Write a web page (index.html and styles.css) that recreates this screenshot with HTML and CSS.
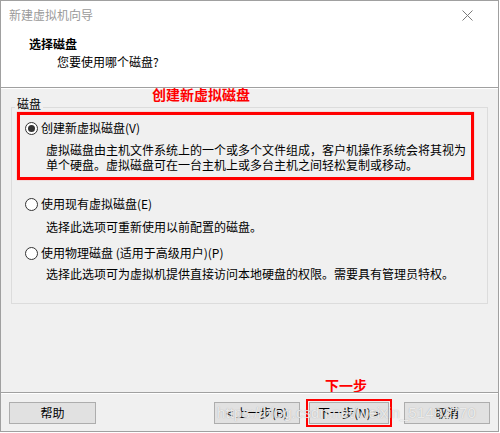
FILE: index.html
```html
<!DOCTYPE html>
<html lang="zh-CN">
<head>
<meta charset="utf-8">
<title>新建虚拟机向导</title>
<link rel="stylesheet" href="styles.css">
</head>
<body>
<div class="window">
  <div class="header">
    <div class="titlebar">
      <span class="title">新建虚拟机向导</span>
      <svg class="close" width="11" height="11" viewBox="0 0 11 11"><path d="M0.5 0.5 L10.5 10.5 M10.5 0.5 L0.5 10.5" stroke="#7a7a7a" stroke-width="1" fill="none"/></svg>
    </div>
    <div class="heading">选择磁盘</div>
    <div class="subtitle">您要使用哪个磁盘?</div>
  </div>
  <div class="body">
    <div class="note note-top">创建新虚拟磁盘</div>
    <div class="group">
      <span class="legend">磁盘</span>
      <div class="option option-1 highlighted">
        <div class="radio-row"><span class="radio checked"></span><span>创建新虚拟磁盘(V)</span></div>
        <div class="desc desc-1">虚拟磁盘由主机文件系统上的一个或多个文件组成，客户机操作系统会将其视为<br>单个硬盘。虚拟磁盘可在一台主机上或多台主机之间轻松复制或移动。</div>
      </div>
      <div class="option option-2">
        <div class="radio-row"><span class="radio"></span><span>使用现有虚拟磁盘(E)</span></div>
        <div class="desc desc-2">选择此选项可重新使用以前配置的磁盘。</div>
      </div>
      <div class="option option-3">
        <div class="radio-row"><span class="radio"></span><span>使用物理磁盘 (适用于高级用户)(P)</span></div>
        <div class="desc desc-3">选择此选项可为虚拟机提供直接访问本地硬盘的权限。需要具有管理员特权。</div>
      </div>
    </div>
    <div class="note note-next">下一步</div>
  </div>
  <div class="footer">
    <button class="btn btn-help">帮助</button>
    <button class="btn btn-back">&lt; 上一步(B)</button>
    <button class="btn btn-next">下一步(N) &gt;</button>
    <button class="btn btn-cancel">取消</button>
  </div>
  <div class="watermark">https://blog.csdn.net/weixin_51482770</div>
</div>
</body>
</html>
```

FILE: styles.css
```css
* { box-sizing: border-box; }

html, body {
  margin: 0;
  padding: 0;
  background: #ffffff;
}

body {
  font-family: "Noto Sans CJK SC", "Noto Sans", sans-serif;
  font-size: 12px;
  color: #000;
}

.window {
  position: relative;
  width: 499px;
  height: 432px;
  border: 1px solid #a0a0a0;
  background: #f0f0f0;
  display: flex;
  flex-direction: column;
}

.header {
  height: 87px;
  flex: none;
  background: #ffffff;
  border-bottom: 1px solid #a0a0a0;
}

.titlebar {
  display: flex;
  justify-content: space-between;
  align-items: center;
  height: 16px;
  margin-top: 6px;
  padding: 0 25px 0 8px;
}

.title {
  color: #9a9a9a;
  line-height: 16px;
}

.close { display: block; }

.heading {
  font-weight: bold;
  line-height: 16px;
  margin-top: 13px;
  padding-left: 28px;
}

.subtitle {
  line-height: 16px;
  margin-top: 2px;
  padding-left: 56px;
}

.body {
  flex: 1;
  display: flex;
  flex-direction: column;
  border-top: 1px solid #ffffff;
  padding-left: 10px;
}

.note {
  color: #ff0000;
  font-weight: bold;
  font-size: 14px;
}

.note-top {
  line-height: 10px;
  height: 10px;
  padding-left: 141px;
}

.note-next {
  margin-top: auto;
  line-height: 14px;
  height: 14px;
  padding-left: 314px;
}

.group {
  width: 477px;
  margin-top: 8px;
  border: 1px solid #dcdcdc;
  padding-bottom: 19px;
}

.legend {
  display: block;
  width: fit-content;
  line-height: 14px;
  margin: -11px 0 0 3px;
  padding: 0 2px;
  background: #f0f0f0;
}

.option {
  margin-left: 5px;
  width: 457px;
  border: 3px solid transparent;
  padding: 5px 0 0 5px;
}

.option.highlighted {
  border-color: #ff0000;
  box-shadow: 0 0 1px 0 rgba(255, 0, 0, 0.5);
}

.option-1 { margin-top: 1px; height: 68px; }
.option-2 { margin-top: 8px; }
.option-3 { margin-top: 0; }

.radio-row {
  display: flex;
  align-items: center;
  height: 16px;
  line-height: 16px;
}

.radio {
  width: 13px;
  height: 13px;
  border: 1px solid #333333;
  border-radius: 50%;
  background: #ffffff;
  margin-right: 3px;
  display: flex;
  align-items: center;
  justify-content: center;
  flex: none;
}

.radio.checked::after {
  content: "";
  width: 7px;
  height: 7px;
  border-radius: 50%;
  background: #333333;
}

.desc {
  padding-left: 21px;
  line-height: 15px;
}

.desc-1 { margin-top: 6px; }
.desc-2 { margin-top: 7px; }
.desc-3 { margin-top: 5px; }

.footer {
  height: 39px;
  flex: none;
  border-top: 1px solid #a0a0a0;
  box-shadow: inset 0 1px 0 #ffffff;
  display: flex;
  align-items: flex-start;
  padding: 9px 0 0 8px;
}

.btn {
  height: 22px;
  border: 1px solid #adadad;
  background: #e1e1e1;
  font-family: "Noto Sans CJK SC", "Noto Sans", sans-serif;
  font-size: 12px;
  line-height: 18px;
  color: #000;
  padding: 0;
}

.btn-help { width: 87px; }
.btn-back { width: 86px; margin-left: 118px; }
.btn-next {
  width: 80px;
  margin-left: 9px;
  outline: 2px solid #ff0000;
  outline-offset: 1px;
}
.btn-cancel { width: 86px; margin-left: 15px; }

.watermark {
  position: absolute;
  left: 216px;
  top: 402px;
  font-family: "Liberation Sans", Arial, sans-serif;
  font-size: 15px;
  line-height: 20px;
  color: rgba(255, 255, 255, 0.75);
  text-shadow: 0 0 1px rgba(120, 120, 120, 0.6);
  letter-spacing: 0.1px;
  white-space: nowrap;
  pointer-events: none;
}
```
